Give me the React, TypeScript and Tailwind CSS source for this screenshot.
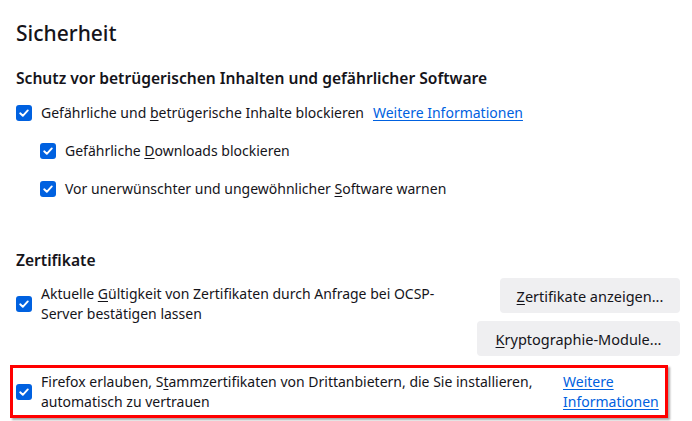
import type { ReactNode } from 'react';

function Check() {
  return (
    <span className="flex h-4 w-4 shrink-0 items-center justify-center rounded-[3px] bg-[#0061e0]">
      <svg width="12" height="12" viewBox="0 0 12 12" fill="none">
        <path d="M2.2 6.3 4.8 8.8 9.8 3.4" stroke="white" strokeWidth="1.9" strokeLinecap="round" strokeLinejoin="round" />
      </svg>
    </span>
  );
}

function Key({ children }: { children: ReactNode }) {
  return <span className="underline underline-offset-2">{children}</span>;
}

function Link({ children }: { children: ReactNode }) {
  return <span className="text-[#0061e0] underline underline-offset-2">{children}</span>;
}

function Row({ indent, children }: { indent?: boolean; children: ReactNode }) {
  return (
    <div className={`flex h-[38px] items-center gap-[9px] ${indent ? 'pl-6' : ''}`}>
      <Check />
      <span>{children}</span>
    </div>
  );
}

export default function App() {
  return (
    <div className="h-[421px] w-[692px] overflow-hidden bg-white font-['Noto_Sans',sans-serif] text-[14px] leading-5 text-[#15141a]">
      <div className="pl-4 pr-3 pt-[17px]">
        <h1 className="text-[21px] leading-8 font-medium">Sicherheit</h1>

        <h2 className="mt-[19px] text-[15.6px] leading-5 font-semibold">
          Schutz vor betrügerischen Inhalten und gefährlicher Software
        </h2>

        <div className="mt-[6px]">
          <Row>
            Gefährliche und <Key>b</Key>etrügerische Inhalte blockieren
            <span className="ml-[9px]">
              <Link>Weitere Informationen</Link>
            </span>
          </Row>
          <Row indent>
            Gefährliche <Key>D</Key>ownloads blockieren
          </Row>
          <Row indent>
            Vor unerwünschter und ungewöhnlicher <Key>S</Key>oftware warnen
          </Row>
        </div>

        <h2 className="mt-[42px] text-[15.6px] leading-5 font-semibold">Zertifikate</h2>

        <div className="mt-[8px] flex items-start justify-between">
          <div className="mt-[6px] flex items-center gap-[9px]">
            <Check />
            <span>
              Aktuelle <Key>G</Key>ültigkeit von Zertifikaten durch Anfrage bei OCSP-
              <br />
              Server bestätigen lassen
            </span>
          </div>
          <div className="flex flex-col items-end gap-2">
            <button className="h-[35px] w-[180px] rounded-[4px] bg-[#efeff1] text-[14.5px] text-[#15141a]">
              <Key>Z</Key>ertifikate anzeigen...
            </button>
            <button className="h-[35px] w-[203px] rounded-[4px] bg-[#efeff1] text-[14.5px] text-[#15141a]">
              <Key>K</Key>ryptographie-Module...
            </button>
          </div>
        </div>
      </div>

      <div className="ml-[10px] mt-[9px] flex h-[53px] w-[658px] items-center border-[3px] border-[#ff0000] pl-[3px] shadow-[2px_2px_2px_rgba(0,0,0,0.35)]">
        <Check />
        <span className="ml-[9px] w-[522px]">
          Firefox erlauben, S<Key>t</Key>ammzertifikaten von Drittanbietern, die Sie installieren,
          <br />
          automatisch zu vertrauen
        </span>
        <span>
          <Link>Weitere</Link>
          <br />
          <Link>Informationen</Link>
        </span>
      </div>
    </div>
  );
}
